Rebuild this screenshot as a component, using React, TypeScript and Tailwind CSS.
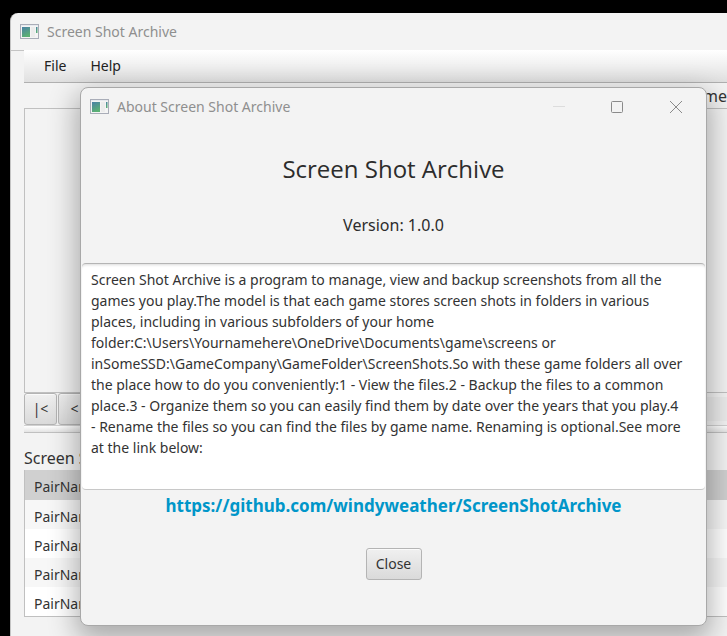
import React from "react";

const aboutText = [
  "Screen Shot Archive is a program to manage, view and backup screenshots from all the",
  "games you play.The model is that each game stores screen shots in folders in various",
  "places, including in various subfolders of your home",
  "folder:C:\\Users\\Yournamehere\\OneDrive\\Documents\\game\\screens or",
  "inSomeSSD:\\GameCompany\\GameFolder\\ScreenShots.So with these game folders all over",
  "the place how to do you conveniently:1 - View the files.2 - Backup the files to a common",
  "place.3 - Organize them so you can easily find them by date over the years that you play.4",
  "- Rename the files so you can find the files by game name. Renaming is optional.See more",
  "at the link below:",
].join("\n");

const pairs = [1, 2, 3, 4, 5];

const AppIcon = () => (
  <svg width="19" height="16" viewBox="0 0 19 16" className="shrink-0" aria-hidden="true">
    <defs>
      <linearGradient id="pane" x1="0" y1="0" x2="0.4" y2="1">
        <stop offset="0" stopColor="#4a80a6" />
        <stop offset="1" stopColor="#5bb074" />
      </linearGradient>
    </defs>
    <rect x="0.5" y="0.5" width="18" height="14" fill="#f4f4f4" stroke="#a9adb8" />
    <rect x="1" y="1" width="17" height="1" fill="#e6e9ee" />
    <rect x="2" y="3" width="8" height="10" fill="url(#pane)" />
    <rect x="11" y="3" width="4" height="10" fill="#ececec" />
    <rect x="16" y="3" width="1.5" height="6" fill="url(#pane)" />
  </svg>
);

const TitleBar = ({ title, children }: any) => (
  <div className="flex h-[37px] items-center pl-[9px] text-sm text-[#8f8f8f]">
    <AppIcon />
    <h2 className="ml-2 flex-1">{title}</h2>
    {children}
  </div>
);

const fxButton =
  "rounded-[3px] border border-[#b4b4b4] bg-linear-to-b from-[#f0f0f0] to-[#dadada] shadow-[inset_0_1px_0_#fafafa]";

const AboutDialog = () => (
  <div
    role="dialog"
    aria-label="About Screen Shot Archive"
    className="absolute left-20 right-5 top-[87px] flex h-[539px] flex-col overflow-hidden rounded-lg border border-[#a8a8a8] bg-[#f3f3f3] shadow-[0_10px_28px_4px_rgba(0,0,0,0.3)]"
  >
    <TitleBar title="About Screen Shot Archive">
      <div className="flex h-full items-center text-[#8a8a8a]">
        <button aria-label="Minimize" className="flex h-full w-[58px] items-center justify-center text-[#dcdcdc]">
          <svg width="12" height="12" fill="none" stroke="currentColor"><path d="M0 5.5h12" /></svg>
        </button>
        <button aria-label="Maximize" className="flex h-full w-[58px] items-center justify-center">
          <svg width="12" height="12" fill="none" stroke="currentColor"><rect x="0.5" y="0.5" width="11" height="11" rx="1" /></svg>
        </button>
        <button aria-label="Close window" className="flex h-full w-[60px] items-center justify-center">
          <svg width="12" height="12" fill="none" stroke="currentColor"><path d="M0 0l12 12M12 0L0 12" /></svg>
        </button>
      </div>
    </TitleBar>
    <div className="flex h-[138px] flex-col items-center pt-7 text-[#2c2c2c]">
      <h1 className="font-['Open_Sans',sans-serif] text-2xl leading-8">Screen Shot Archive</h1>
      <p className="mt-7 text-base leading-6">Version: 1.0.0</p>
    </div>
    <textarea
      readOnly
      aria-label="About"
      wrap="off"
      value={aboutText}
      className="mx-px block h-[227px] resize-none overflow-hidden rounded-sm border-y border-t-[#b4b4b4] border-b-[#c8c8c8] bg-white px-[9px] py-[5px] text-sm leading-[21px] text-[#333333] shadow-[inset_0_3px_3px_-2px_rgba(0,0,0,0.15)] outline-none"
    />
    <div className="flex flex-col items-center pt-1">
      <a href="https://github.com/windyweather/ScreenShotArchive" className="text-[17px] leading-6 font-bold text-[#0096c9]">
        https://github.com/windyweather/ScreenShotArchive
      </a>
      <button className={`mt-[30px] h-8 w-14 text-sm text-[#333333] ${fxButton}`}>Close</button>
    </div>
  </div>
);

const App = () => {
  return (
    <div className="relative min-h-screen overflow-hidden bg-black pl-2.5 pt-[13px] font-['Noto_Sans',sans-serif]">
      <main className="flex min-h-[calc(100vh-13px)] flex-col rounded-tl-lg border-l border-[#c4c4c4] bg-[#f3f3f3]">
        <TitleBar title="Screen Shot Archive" />
        <div className="w-[13px] border-t border-[#c4c4c4]" />
        <div className="-mt-px ml-[13px] flex flex-col">
          <nav className="flex h-[33px] items-center gap-6 border-b border-[#b0b0b0] bg-linear-to-b from-white to-[#e0e0e0] pl-5 text-sm text-[#222222]">
            <button>File</button>
            <button>Help</button>
          </nav>
          <p className="h-[25px] text-right text-base leading-[27px] text-[#333333]">Filename</p>
          <div className="h-[285px] border-y border-l border-[#c0c0c0]" />
          <div className="flex h-8 gap-px text-sm text-[#333333]">
            <button className={`w-[33px] ${fxButton}`}>|&lt;</button>
            <button className={`w-[33px] ${fxButton}`}>&lt;</button>
            <div className="my-1 flex-1 bg-[#ececec]" />
          </div>
          <div className="h-2 border-y border-t-[#d0d0d0] border-b-[#c0c0c0] bg-linear-to-b from-white to-[#e4e4e4]" />
          <h3 className="h-[37px] pt-[13px] text-base leading-6 text-[#333333]">Screen Shots</h3>
          <ul className="border-b border-l border-[#c0c0c0] text-sm text-[#333333]">
            {pairs.map((n, idx) => (
              <li
                key={n}
                className={`flex items-center pl-[9px] pt-1 ${idx === 0 ? "h-[30px] bg-[#d0d0d0]" : idx % 2 ? "h-[29px] bg-[#f7f7f7]" : "h-[29px] bg-white"}`}
              >
                PairName
              </li>
            ))}
          </ul>
        </div>
      </main>
      <AboutDialog />
    </div>
  );
};

export default App;
